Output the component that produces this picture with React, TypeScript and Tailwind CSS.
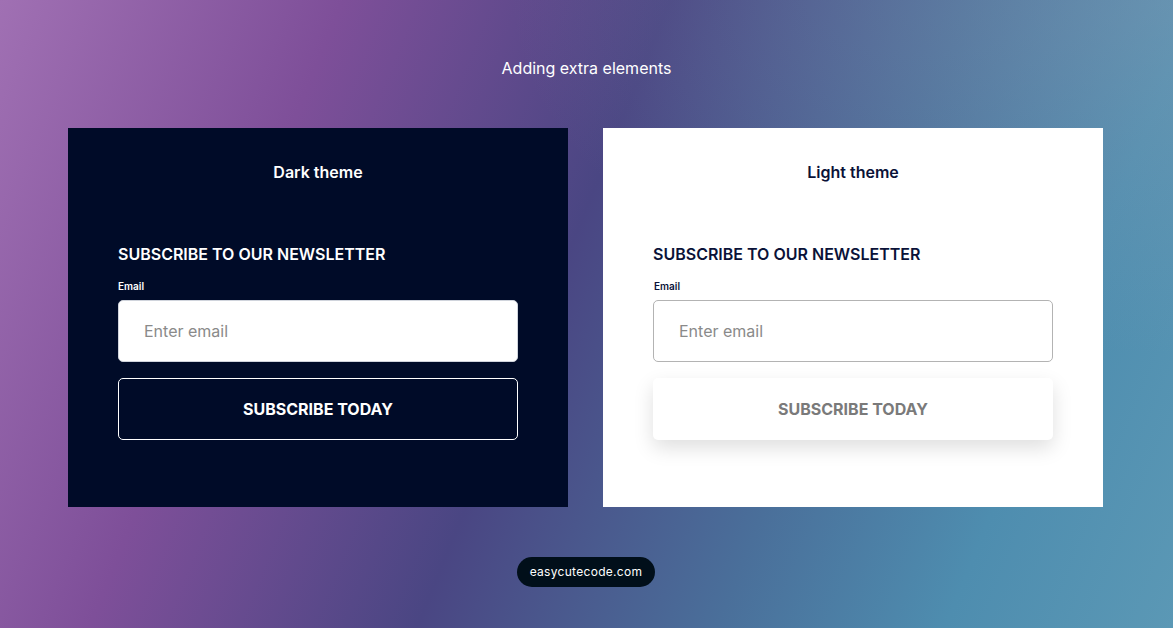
import React from "react";

function Card({ dark }: { dark: boolean }) {
  return (
    <div
      className={`w-[500px] h-[379px] flex flex-col items-center ${
        dark ? "bg-[#000b28]" : "bg-white"
      }`}
    >
      <div
        className={`mt-[34px] text-[16px] leading-[20px] font-semibold ${
          dark ? "text-white" : "text-[#0a1238]"
        }`}
      >
        {dark ? "Dark theme" : "Light theme"}
      </div>
      <div className="w-[400px] mt-[62px] flex flex-col">
        <div
          className={`text-[16px] leading-[20px] font-semibold ${
            dark ? "text-white" : "text-[#0a1238]"
          }`}
        >
          SUBSCRIBE TO OUR NEWSLETTER
        </div>
        <div
          className={`mt-[16px] text-[10px] leading-[13px] font-semibold ${
            dark ? "text-white" : "text-[#0a1238] pl-[1px]"
          }`}
        >
          Email
        </div>
        <div
          className={`mt-[7px] h-[62px] rounded-[5px] bg-white flex items-center pl-[25px] border ${
            dark ? "border-[#d0d4dc]" : "border-[#b3b3b3]"
          }`}
        >
          <span className="text-[16px] text-[#8a8a8a]">Enter email</span>
        </div>
        <div
          className={`mt-[16px] h-[62px] rounded-[5px] flex items-center justify-center text-[16px] font-bold ${
            dark
              ? "border border-white text-white"
              : "bg-white text-[#7a7a7a] shadow-[0_8px_20px_rgba(0,0,0,0.13)]"
          }`}
        >
          SUBSCRIBE TODAY
        </div>
      </div>
    </div>
  );
}

export default function App() {
  return (
    <div className="w-[1173px] h-[628px] relative overflow-hidden font-['Inter',sans-serif] bg-[linear-gradient(112deg,#a070b3_0%,#7e4f99_24%,#4a4683_47%,#4a6f9a_68%,#4e8daf_84%,#5b98b5_100%)]">
      <div className="absolute inset-0 bg-[radial-gradient(ellipse_at_100%_0%,rgba(150,165,185,0.35),transparent_40%)]" />
      <div className="relative flex flex-col">
        <div className="mt-[58px] text-center text-[16px] leading-[20px] text-white">
          Adding extra elements
        </div>
        <div className="mt-[50px] pl-[68px] flex gap-[35px]">
          <Card dark />
          <Card dark={false} />
        </div>
        <div className="mt-[50px] ml-[517px] h-[30px] w-[138px] rounded-full bg-[#010f1a] text-white text-[12px] flex items-center justify-center tracking-[0.3px]">
          easycutecode.com
        </div>
      </div>
    </div>
  );
}
